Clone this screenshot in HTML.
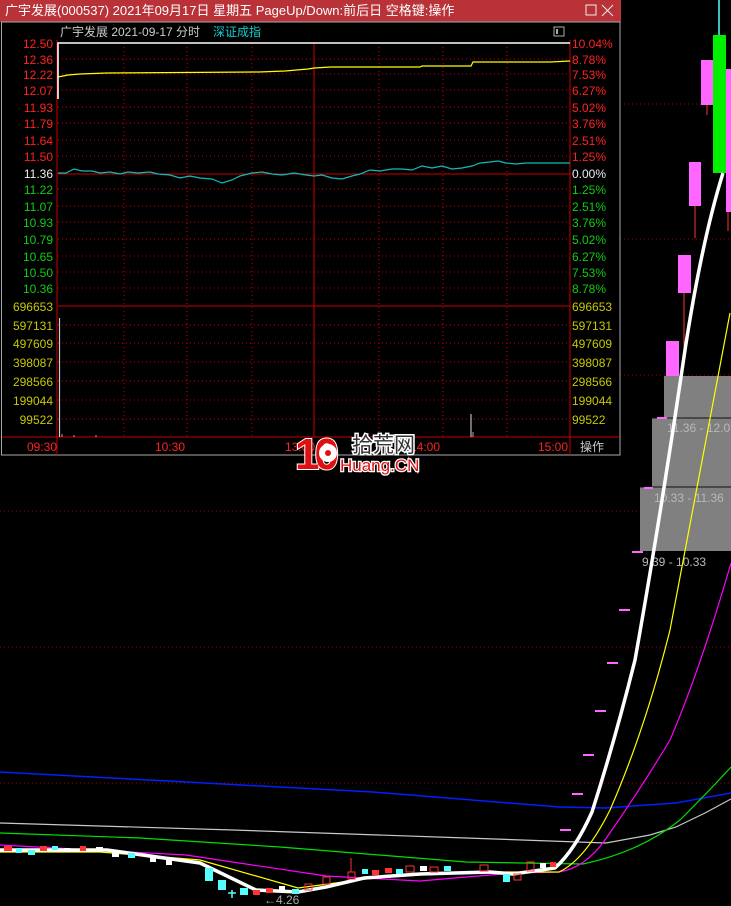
<!DOCTYPE html>
<html><head><meta charset="utf-8"><style>
html,body{margin:0;padding:0;background:#000;}
body{width:731px;height:906px;overflow:hidden;position:relative;font-family:"Liberation Sans","Noto Sans CJK SC",sans-serif;}
svg{position:absolute;left:0;top:0;}
.t{font-family:"Liberation Sans","Noto Sans CJK SC",sans-serif;}
</style></head><body>
<svg width="731" height="906" viewBox="0 0 731 906" xmlns="http://www.w3.org/2000/svg">
<rect width="731" height="906" fill="#000"/>
<g stroke="#a00" stroke-dasharray="1,3" stroke-width="1">
<line x1="620" y1="104" x2="731" y2="104"/>
<line x1="620" y1="239" x2="731" y2="239"/>
<line x1="620" y1="375" x2="731" y2="375"/>
<line x1="0" y1="511" x2="731" y2="511"/>
<line x1="0" y1="647" x2="731" y2="647"/>
<line x1="0" y1="783" x2="731" y2="783"/>
</g>
<rect x="664" y="376" width="67" height="42" fill="#808080"/>
<rect x="652" y="418" width="79" height="69" fill="#808080"/>
<rect x="640" y="487" width="91" height="64" fill="#808080"/>
<line x1="652" y1="418" x2="731" y2="418" stroke="#111"/>
<line x1="640" y1="487" x2="731" y2="487" stroke="#111"/>
<text x="667" y="432" fill="#b8b8b8" font-size="12" class="t">11.36 - 12.0</text>
<text x="654" y="502" fill="#b8b8b8" font-size="12" class="t">10.33 - 11.36</text>
<text x="642" y="566" fill="#b8b8b8" font-size="12" class="t">9.39 - 10.33</text>
<line x1="719" y1="0" x2="719" y2="35" stroke="#5ff" stroke-width="1.5"/>
<rect x="713" y="35" width="13" height="138" fill="#00f000"/>
<line x1="728" y1="212" x2="728" y2="231" stroke="#f33"/>
<rect x="726" y="69" width="5" height="143" fill="#f6f"/>
<line x1="707" y1="105" x2="707" y2="115" stroke="#f33"/>
<rect x="701" y="60" width="12" height="45" fill="#f6f"/>
<line x1="695" y1="206" x2="695" y2="238" stroke="#f33"/>
<rect x="689" y="162" width="12" height="44" fill="#f6f"/>
<line x1="684" y1="293" x2="684" y2="353" stroke="#f33"/>
<rect x="678" y="255" width="13" height="38" fill="#f6f"/>
<rect x="666" y="341" width="13" height="35" fill="#f6f"/>
<g stroke="#f6f" stroke-width="2">
<line x1="657" y1="418" x2="667" y2="418"/><line x1="644" y1="488" x2="653" y2="488"/>
<line x1="632" y1="552" x2="643" y2="552"/><line x1="619" y1="610" x2="630" y2="610"/>
<line x1="607" y1="663" x2="618" y2="663"/><line x1="595" y1="711" x2="606" y2="711"/>
<line x1="583" y1="755" x2="594" y2="755"/><line x1="572" y1="794" x2="583" y2="794"/>
<line x1="560" y1="830" x2="571" y2="830"/>
</g>
<g fill="none">
<polyline stroke="#0020ff" stroke-width="1.5" points="0,772 186,782 373,792 559,807 606,808 676,803 731,793"/>
<polyline stroke="#c8c8c8" stroke-width="1.2" points="0,823 233,830 466,838 606,843 650,835 676,827 705,813 731,799"/>
<path stroke="#00e000" stroke-width="1.2" d="M0,833 L140,838 L280,847 L466,862 L583,864 Q640,852 680,820 Q710,790 731,767"/>
<path stroke="#f0f" stroke-width="1.2" d="M0,845 L93,850 L186,855 L326,876 L420,881 L513,873 L559,872 Q585,868 605,840 Q640,790 670,740 Q700,670 731,563"/>
<path stroke="#ff0" stroke-width="1.2" d="M0,852 L100,852 L200,860 L298,888 L373,878 L466,872 L559,872 Q585,860 610,810 Q645,730 670,630 Q700,470 730,313"/>
<path stroke="#fff" stroke-width="3.5" d="M0,850 L107,850 L200,863 L256,890 L298,892 L326,887 L364,878 L420,874 L490,872 L513,874 L555,868 Q575,850 592,812 Q615,740 635,660 Q660,520 685,350 Q702,240 723,173"/>
</g>
<g>
<rect x="4" y="846" width="8" height="5" fill="#f33"/><rect x="16" y="848" width="6" height="5" fill="#5ff"/>
<rect x="28" y="850" width="7" height="5" fill="#5ff"/><rect x="40" y="846" width="7" height="5" fill="#f33"/>
<rect x="52" y="846" width="6" height="4" fill="#5ff"/><rect x="64" y="848" width="6" height="4" fill="#fff"/>
<rect x="80" y="846" width="6" height="5" fill="#f33"/><rect x="96" y="847" width="7" height="4" fill="#fff"/>
<rect x="112" y="852" width="7" height="5" fill="#fff"/><rect x="128" y="853" width="7" height="5" fill="#5ff"/>
<rect x="150" y="857" width="6" height="5" fill="#fff"/><rect x="166" y="860" width="6" height="5" fill="#fff"/>
<rect x="205" y="868" width="8" height="13" fill="#5ff"/><rect x="218" y="880" width="8" height="10" fill="#5ff"/>
<line x1="232" y1="890" x2="232" y2="898" stroke="#5ff" stroke-width="1.5"/><line x1="228" y1="893" x2="236" y2="893" stroke="#5ff" stroke-width="1.5"/>
<rect x="240" y="888" width="8" height="7" fill="#5ff"/><rect x="253" y="890" width="7" height="5" fill="#f33"/>
<rect x="266" y="888" width="7" height="5" fill="#f33"/><rect x="279" y="886" width="6" height="5" fill="#fff"/>
<rect x="292" y="889" width="7" height="5" fill="#5ff"/><rect x="305" y="884" width="7" height="6" fill="none" stroke="#f33"/>
<rect x="323" y="877" width="7" height="7" fill="none" stroke="#f33"/><rect x="348" y="872" width="7" height="7" fill="none" stroke="#f33"/>
<line x1="351" y1="858" x2="351" y2="872" stroke="#f33"/>
<rect x="362" y="869" width="6" height="5" fill="#5ff"/><rect x="372" y="870" width="7" height="5" fill="#f33"/>
<rect x="385" y="868" width="7" height="5" fill="#f33"/><rect x="396" y="869" width="7" height="5" fill="#5ff"/>
<rect x="406" y="866" width="8" height="6" fill="none" stroke="#f33"/><rect x="420" y="866" width="7" height="5" fill="#fff"/>
<rect x="430" y="867" width="8" height="5" fill="none" stroke="#f33"/><rect x="444" y="866" width="7" height="5" fill="#5ff"/>
<rect x="480" y="865" width="8" height="6" fill="none" stroke="#f33"/><rect x="503" y="874" width="7" height="8" fill="#5ff"/>
<rect x="514" y="874" width="7" height="6" fill="none" stroke="#f33"/><rect x="527" y="862" width="7" height="9" fill="none" stroke="#f33"/>
<rect x="540" y="863" width="6" height="5" fill="#fff"/><rect x="550" y="862" width="6" height="5" fill="#f33"/>
</g>
<text x="264" y="904" fill="#aaa" font-size="12" class="t">←4.26</text>

<rect x="0" y="0" width="621" height="22" fill="#b83238"/>
<text x="5" y="15" fill="#fff" font-size="13" class="t">广宇发展(000537) 2021年09月17日 星期五 PageUp/Down:前后日 空格键:操作</text>
<rect x="586" y="5" width="10" height="10" fill="none" stroke="#eee"/>
<path d="M602 5 L613 16 M613 5 L602 16" stroke="#eee" stroke-width="1"/>
<rect x="1.5" y="22" width="618.5" height="433" fill="#000" stroke="#aaa" stroke-width="1"/>
<text x="60" y="36" fill="#ccc" font-size="12" class="t">广宇发展  2021-09-17 分时</text>
<text x="213" y="36" fill="#1cc" font-size="12" class="t">深证成指</text>
<rect x="554" y="27" width="10" height="9" fill="none" stroke="#aaa"/><rect x="556" y="29" width="2" height="5" fill="#aaa"/>
<g stroke="#c00" stroke-dasharray="1,3">
<line x1="58" y1="59" x2="570" y2="59"/><line x1="58" y1="74" x2="570" y2="74"/><line x1="58" y1="90" x2="570" y2="90"/>
<line x1="58" y1="107" x2="570" y2="107"/><line x1="58" y1="123" x2="570" y2="123"/><line x1="58" y1="140" x2="570" y2="140"/>
<line x1="58" y1="156" x2="570" y2="156"/><line x1="58" y1="189" x2="570" y2="189"/><line x1="58" y1="206" x2="570" y2="206"/>
<line x1="58" y1="222" x2="570" y2="222"/><line x1="58" y1="239" x2="570" y2="239"/><line x1="58" y1="256" x2="570" y2="256"/>
<line x1="58" y1="272" x2="570" y2="272"/><line x1="58" y1="288" x2="570" y2="288"/>
<line x1="58" y1="325" x2="570" y2="325"/><line x1="58" y1="343" x2="570" y2="343"/><line x1="58" y1="362" x2="570" y2="362"/>
<line x1="58" y1="381" x2="570" y2="381"/><line x1="58" y1="400" x2="570" y2="400"/><line x1="58" y1="419" x2="570" y2="419"/>
<line x1="124" y1="43" x2="124" y2="437"/><line x1="187" y1="43" x2="187" y2="437"/><line x1="252" y1="43" x2="252" y2="437"/>
<line x1="379" y1="43" x2="379" y2="437"/><line x1="443" y1="43" x2="443" y2="437"/><line x1="507" y1="43" x2="507" y2="437"/>
</g>
<g stroke="#c00" stroke-width="1">
<line x1="314" y1="43" x2="314" y2="437"/>
<line x1="57" y1="40" x2="57" y2="455"/><line x1="570" y1="40" x2="570" y2="455"/>
<line x1="2" y1="437" x2="619" y2="437"/>
<line x1="58" y1="306" x2="570" y2="306"/>
<line x1="58" y1="174" x2="570" y2="174"/>
</g>
<polyline fill="none" stroke="#ff0" stroke-width="1.2" points="58,77 68,75 80,74 107,73 259,72 285,71 308,69 314,68 331,67 420,67 422,66 471,66 473,62 550,62 570,61"/>
<polyline fill="none" stroke="#fff" stroke-width="1.6" points="58,99 58,43 570,43"/>
<polyline fill="none" stroke="#1bb" stroke-width="1.2" points="58,173 66,173 74,169 82,171 92,171 100,173 110,172 120,174 128,172 138,173 150,172 158,174 170,175 180,178 190,176 200,178 212,179 222,183 232,180 240,176 252,173 262,172 272,174 282,175 294,173 306,175 314,176 322,175 332,178 342,179 352,176 360,174 370,170 380,171 392,169 402,169 412,170 422,166 432,168 442,166 452,169 462,168 472,166 480,163 490,162 498,161 506,163 516,164 526,163 540,163 570,163"/>
<line x1="59.5" y1="318" x2="59.5" y2="437" stroke="#ccc" stroke-width="1.2"/>
<line x1="471" y1="414" x2="471" y2="437" stroke="#ddd"/>
<g stroke="#aaa"><line x1="62" y1="434" x2="62" y2="437"/><line x1="74" y1="435" x2="74" y2="437"/><line x1="96" y1="435" x2="96" y2="437"/><line x1="473" y1="432" x2="473" y2="437"/></g>
<g font-size="12" class="t" text-anchor="end">
<text x="53" y="48" fill="#f22">12.50</text><text x="53" y="64" fill="#f22">12.36</text><text x="53" y="79" fill="#f22">12.22</text>
<text x="53" y="95" fill="#f22">12.07</text><text x="53" y="112" fill="#f22">11.93</text><text x="53" y="128" fill="#f22">11.79</text>
<text x="53" y="145" fill="#f22">11.64</text><text x="53" y="161" fill="#f22">11.50</text><text x="53" y="178" fill="#eee">11.36</text>
<text x="53" y="194" fill="#1c1">11.22</text><text x="53" y="211" fill="#1c1">11.07</text><text x="53" y="227" fill="#1c1">10.93</text>
<text x="53" y="244" fill="#1c1">10.79</text><text x="53" y="261" fill="#1c1">10.65</text><text x="53" y="277" fill="#1c1">10.50</text>
<text x="53" y="293" fill="#1c1">10.36</text>
<g fill="#c8c800"><text x="53" y="311">696653</text><text x="53" y="330">597131</text><text x="53" y="348">497609</text>
<text x="53" y="367">398087</text><text x="53" y="386">298566</text><text x="53" y="405">199044</text><text x="53" y="424">99522</text></g>
</g>
<g font-size="12" class="t">
<text x="572" y="48" fill="#f22">10.04%</text><text x="572" y="64" fill="#f22">8.78%</text><text x="572" y="79" fill="#f22">7.53%</text>
<text x="572" y="95" fill="#f22">6.27%</text><text x="572" y="112" fill="#f22">5.02%</text><text x="572" y="128" fill="#f22">3.76%</text>
<text x="572" y="145" fill="#f22">2.51%</text><text x="572" y="161" fill="#f22">1.25%</text><text x="572" y="178" fill="#eee">0.00%</text>
<text x="572" y="194" fill="#1c1">1.25%</text><text x="572" y="211" fill="#1c1">2.51%</text><text x="572" y="227" fill="#1c1">3.76%</text>
<text x="572" y="244" fill="#1c1">5.02%</text><text x="572" y="261" fill="#1c1">6.27%</text><text x="572" y="277" fill="#1c1">7.53%</text>
<text x="572" y="293" fill="#1c1">8.78%</text>
<g fill="#c8c800"><text x="572" y="311">696653</text><text x="572" y="330">597131</text><text x="572" y="348">497609</text>
<text x="572" y="367">398087</text><text x="572" y="386">298566</text><text x="572" y="405">199044</text><text x="572" y="424">99522</text></g>
<g fill="#f22"><text x="27" y="451">09:30</text><text x="155" y="451">10:30</text><text x="285" y="451">13:00</text><text x="410" y="451">14:00</text><text x="538" y="451">15:00</text></g>
<text x="580" y="451" fill="#ccc">操作</text>
</g>
<g class="t">
<text x="295" y="469" font-size="44" font-weight="bold" fill="#e01010" stroke="#fff" stroke-width="2" paint-order="stroke" letter-spacing="-5">10</text>
<circle cx="328" cy="453" r="9" fill="#fff"/>
<circle cx="328" cy="453" r="3" fill="#e01010"/>
<text x="352" y="452" font-size="21" fill="#333" stroke="#fff" stroke-width="3" paint-order="stroke">拾荒网</text>
<text x="340" y="471" font-size="17" fill="#e01010" stroke="#fff" stroke-width="2.5" paint-order="stroke">Huang.CN</text>
</g>
</svg>
</body></html>
